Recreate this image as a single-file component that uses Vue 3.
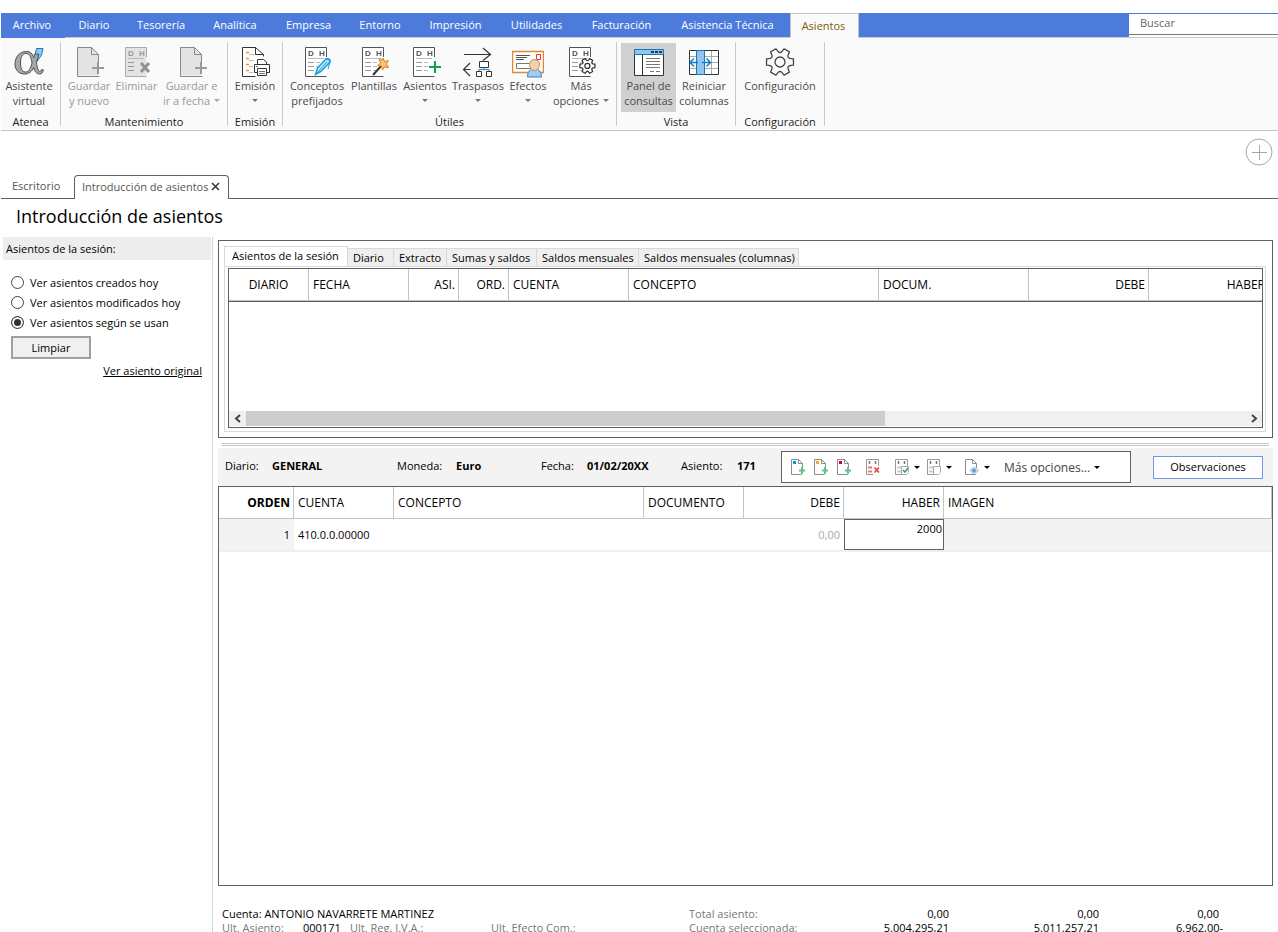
<script setup>
import { ref } from 'vue'

const menu = ['Archivo', 'Diario', 'Tesorería', 'Analítica', 'Empresa', 'Entorno', 'Impresión', 'Utilidades', 'Facturación', 'Asistencia Técnica', 'Asientos']

const groups = [
  { id: 'atenea', label: 'Atenea', items: [{ icon: 'alpha', lines: ['Asistente', 'virtual'] }] },
  {
    id: 'mant', label: 'Mantenimiento', items: [
      { icon: 'save', lines: ['Guardar', 'y nuevo'], disabled: true },
      { icon: 'remove', lines: ['Eliminar'], disabled: true },
      { icon: 'save', lines: ['Guardar e', 'ir a fecha'], caret: true, disabled: true },
    ],
  },
  { id: 'emision', label: 'Emisión', items: [{ icon: 'print', lines: ['Emisión', ''], caret: true }] },
  {
    id: 'utiles', label: 'Útiles', items: [
      { icon: 'pen', lines: ['Conceptos', 'prefijados'] },
      { icon: 'wand', lines: ['Plantillas'] },
      { icon: 'plus', lines: ['Asientos', ''], caret: true },
      { icon: 'transfer', lines: ['Traspasos', ''], caret: true },
      { icon: 'effects', lines: ['Efectos', ''], caret: true },
      { icon: 'docgear', lines: ['Más', 'opciones'], caret: true },
    ],
  },
  {
    id: 'vista', label: 'Vista', items: [
      { icon: 'panel', lines: ['Panel de', 'consultas'], pressed: true },
      { icon: 'columns', lines: ['Reiniciar', 'columnas'] },
    ],
  },
  { id: 'config', label: 'Configuración', items: [{ icon: 'gear', lines: ['Configuración'] }] },
]

const docIcons = ['remove', 'pen', 'wand', 'plus', 'docgear']
const usage = ref('uso')
const radios = [
  { value: 'creados', label: 'Ver asientos creados hoy' },
  { value: 'modificados', label: 'Ver asientos modificados hoy' },
  { value: 'uso', label: 'Ver asientos según se usan' },
]
const sessionTabs = ['Asientos de la sesión', 'Diario', 'Extracto', 'Sumas y saldos', 'Saldos mensuales', 'Saldos mensuales (columnas)']
const sessionCols = [
  { t: 'DIARIO', c: 'c80 mid' }, { t: 'FECHA', c: 'c100' }, { t: 'ASI.', c: 'c50 num' }, { t: 'ORD.', c: 'c50 num' },
  { t: 'CUENTA', c: 'c120' }, { t: 'CONCEPTO', c: 'c250' }, { t: 'DOCUM.', c: 'c150' }, { t: 'DEBE', c: 'c120 num' }, { t: 'HABER', c: 'c120 num' },
]
const haber = ref('2000')

// Six-toothed cog around (15, 15), one tooth every 60 degrees
const at = (deg, r) => `${(15 + r * Math.cos(deg * Math.PI / 180)).toFixed(2)} ${(15 + r * Math.sin(deg * Math.PI / 180)).toFixed(2)}`
const gearPath = 'M' + [0, 60, 120, 180, 240, 300]
  .flatMap(a => [at(a - 21, 10.2), at(a - 13, 13.8), at(a + 13, 13.8), at(a + 21, 10.2), at(a + 30, 9.4)])
  .join('L') + 'z'

const tools = [
  { icon: 'add', color: '#0096dc', name: 'Nueva línea' },
  { icon: 'add', color: '#f5a623', name: 'Insertar línea' },
  { icon: 'add', color: '#d6001c', name: 'Duplicar línea' },
  { icon: 'del', name: 'Borrar línea', gap: true },
  { icon: 'check', name: 'Validar', caret: true, gap: true },
  { icon: 'copy', name: 'Copiar', caret: true },
  { icon: 'view', name: 'Consultar', caret: true, gap: true },
]
</script>

<template>
  <div class="app">
    <header class="menubar">
      <nav class="menu">
        <button v-for="(m, i) in menu" :key="m" type="button" :class="{ file: i === 0, active: m === 'Asientos' }">{{ m }}</button>
      </nav>
      <div class="fill"></div>
      <div class="search"><input type="text" placeholder="Buscar" aria-label="Buscar" /></div>
    </header>

    <section class="ribbon">
      <div v-for="g in groups" :key="g.id" class="group" :class="g.id">
        <div class="items">
          <button v-for="(b, i) in g.items" :key="i" type="button" class="tool" :class="{ off: b.disabled, pressed: b.pressed }">
            <svg class="ico" width="32" height="32" viewBox="0 0 32 32" fill="none" aria-hidden="true">
              <template v-if="b.icon === 'alpha'">
                <path d="M23.500 2.500h6.500l-1.500 6.500-4.500 6.500-2.500-4z" fill="#8fcaf2" stroke="#1878be" />
                <path d="M13.500 5.500c-7 0-11.500 5.500-11.500 12.500 0 6 4 10 9.500 10 4.500 0 7.300-2.500 9.200-6.500 1 4 2.700 6.500 5.800 6.500 2.200 0 3.500-1.600 3.800-4.200h-2c-.2 1.200-.6 1.800-1.500 1.800-1.800 0-2.600-4-3.400-9l2.500-8.500h-4.200l-.9 3.500C19.500 7.800 17.500 5.500 13.500 5.500zM13 7.500c4 0 5.500 5 6 9.500-1.200 6-3.500 9-6.500 9-3.500 0-5-4-5-9 0-5.500 1.800-9.500 5.500-9.500z" fill="#a8a8a8" stroke="#505050" />
              </template>
              <template v-if="b.icon === 'save'">
                <path d="M4.500 1.500h14l7 7v21h-21z" fill="#e3e3e3" />
                <path d="M25.500 16v-7.500l-7-7h-14v29h22M18.500 1.500v7h7" stroke="#888" />
                <path d="M25 16v12M19 22h12" stroke="#999" stroke-width="2" />
              </template>
              <template v-if="docIcons.includes(b.icon)">
                <path d="M4.500 1.500h21v29h-21z" :fill="b.icon === 'remove' ? '#e3e3e3' : '#fff'" />
                <path d="M25.500 11v-9.500h-21v29h21" :stroke="b.icon === 'remove' ? '#aaa' : '#555'" />
                <path d="M7 12.500h16" stroke="#bbb" />
                <path d="M7 16.500h6M7 20.500h6M7 24.500h6" stroke="#999" />
                <path v-if="b.icon !== 'remove'" d="M15 16.500h4M15 20.500h4M15 24.500h4" stroke="#bbb" />
                <text x="7" y="10" class="dh" :fill="b.icon === 'remove' ? '#999' : '#555'">D</text>
                <text x="18" y="10" class="dh" :fill="b.icon === 'remove' ? '#999' : '#555'">H</text>
              </template>
              <path v-if="b.icon === 'remove'" d="M20 17l8 9M28 17l-8 9" stroke="#929292" stroke-width="3" />
              <template v-if="b.icon === 'print'">
                <path d="M3.500 1.500h14l7 7v21h-21z" fill="#fff" />
                <path d="M24.500 10.500v-2l-8-7h-13v29h13M16.500 1.500v7h8" stroke="#333" />
                <path d="M7 6.500h3M7 12.500h3M7 18.500h3M7 24.500h3" stroke="#f39a12" stroke-width="1.500" />
                <path d="M10 8.500h5M10 14.500h5M10 20.500h4M10 26.500h4" stroke="#bbb" />
                <path d="M18.500 18.500v-5h6l3 2.500v2.500" fill="#fff" stroke="#333" />
                <path d="M15.500 18.500h15v8h-15z" fill="#fff" stroke="#333" />
                <path d="M18.500 22.500h9v7h-9z" fill="#fff" stroke="#333" />
                <path d="M20 25.500h6M20 27.500h6M17 20.500h2" stroke="#777" />
              </template>
              <template v-if="b.icon === 'pen'">
                <path d="M14.500 28.500l2-6.500 8-8.500c2-2 5.500 0 4 3l-8.500 9z" fill="#b9e6fb" stroke="#1a9ede" stroke-width="1.500" />
                <path d="M16 27L26 16M24 13l5.500 1-2.500 9" stroke="#1a9ede" />
              </template>
              <template v-if="b.icon === 'wand'">
                <path d="M15 29l9-10" stroke="#333" stroke-width="2" />
                <path d="M25 12l1.500 3.500 4-1-2 3.500 2 3.500-4-.5-2 3-1-4-4-.5 3-2.500-1.500-4 3.500 1z" fill="#f8c27a" stroke="#df8326" />
              </template>
              <path v-if="b.icon === 'plus'" d="M26 15v12M20 21h12" stroke="#12a04c" stroke-width="2" />
              <template v-if="b.icon === 'transfer'">
                <path d="M2 8.500h26M21 2l7.500 6.500-7.500 6M1.500 23.500h7M8 17l-6.500 6.500 6.500 6.500" stroke="#333" stroke-width="1.200" />
                <path d="M17.500 15.500h9v6h-9zM14.500 25.500h5v5h-5zM24.500 25.500h5v5h-5z" fill="#fff" stroke="#333" />
                <path d="M22 21.500v2M17 25v-1.500h10V25" stroke="#2687cc" />
              </template>
              <template v-if="b.icon === 'effects'">
                <path d="M.5 5.500h31v21H.5z" fill="#fff" stroke="#e88430" stroke-width="1.500" />
                <path d="M4 9.500h14M4 11.500h11M4 13.500h8" stroke="#555" />
                <path d="M4.500 17.500h15v5h-15z" stroke="#777" />
                <path d="M24.500 8.500h4v5h-4z" stroke="#e33" />
                <path d="M15.500 31c0-5 2-8 7-8s7 3 7 8z" fill="#9fcdf1" stroke="#3b7fc0" />
                <path d="M22.500 24.500c-3 0-5-3-5-6s2-5 5-5 5 2 5 5-2 6-5 6z" fill="#f5cfab" stroke="#b98b63" />
              </template>
              <g v-if="b.icon === 'docgear'" transform="translate(14 11.500) scale(.56)">
                <path :d="gearPath" fill="#fff" stroke="#333" stroke-width="2.200" stroke-linejoin="round" />
                <circle cx="15" cy="15" r="4.500" stroke="#333" stroke-width="2.200" />
              </g>
              <template v-if="b.icon === 'panel'">
                <path d="M1.500 3.500h29v26h-29z" fill="#fff" stroke="#333" />
                <path d="M1.500 3.500h29v5h-29z" fill="#8fc5ee" stroke="#1878be" />
                <path d="M9.500 9v20" stroke="#333" />
                <path d="M18 6h3M22 6h3M26 6h3" stroke="#333" stroke-width="2" />
                <path d="M13 12.500h14M13 15.500h14M13 18.500h14M13 21.500h14M17 25.500h4M23 25.500h4" stroke="#777" />
              </template>
              <template v-if="b.icon === 'columns'">
                <path d="M1.500 4.500h29v24h-29z" fill="#fff" />
                <path d="M1 10.500h29M1 16.500h29M1 22.500h29M8.500 5v23M23.500 5v23" stroke="#aaa" />
                <path d="M1.500 4.500h29v24h-29z" stroke="#333" />
                <path d="M8.500 4.500h8v24h-8z" fill="#8fc5ee" stroke="#1878be" />
                <path d="M10 16.500H2.500M6 12.500l-4 4 4 4M14 16.500h8M18.500 12.500l4 4-4 4" stroke="#0d80cc" stroke-width="1.500" />
              </template>
              <g v-if="b.icon === 'gear'" transform="translate(1 1)">
                <path :d="gearPath" fill="#fafafa" stroke="#444" stroke-width="1.300" stroke-linejoin="round" />
                <circle cx="15" cy="15" r="5" stroke="#444" stroke-width="1.300" />
              </g>
            </svg>
            <span v-for="(l, n) in b.lines" :key="n" class="line">{{ l }}<i v-if="b.caret && n === 1" class="caret" :class="{ spaced: l }"></i></span>
          </button>
        </div>
        <div class="glabel">{{ g.label }}</div>
      </div>
    </section>

    <div class="addrow">
      <button type="button" class="add" aria-label="Añadir">
        <svg width="28" height="28" viewBox="0 0 28 28" fill="none" stroke="#a6a6a6"><circle cx="14" cy="14" r="13" /><path d="M14.500 7v15M7 14.500h15" /></svg>
      </button>
    </div>

    <nav class="tabs">
      <button type="button" class="tab">Escritorio</button>
      <button type="button" class="tab current">Introducción de asientos
        <svg width="9" height="9" viewBox="0 0 9 9" stroke="#333" stroke-width="1.500"><path d="M1 1l7 7M8 1L1 8" /></svg>
      </button>
    </nav>
    <h1>Introducción de asientos</h1>

    <div class="workspace">
      <aside>
        <h2>Asientos de la sesión:</h2>
        <div class="radios">
          <label v-for="r in radios" :key="r.value"><input v-model="usage" type="radio" name="usage" :value="r.value" />{{ r.label }}</label>
        </div>
        <button type="button" class="clear">Limpiar</button>
        <a href="#" class="original">Ver asiento original</a>
      </aside>

      <main>
        <section class="session">
          <div class="stabs">
            <button v-for="(t, i) in sessionTabs" :key="t" type="button" :class="{ on: i === 0 }">{{ t }}</button>
          </div>
          <div class="frame">
            <div class="sgrid">
              <div class="sview">
                <table class="stable">
                  <thead><tr><th v-for="c in sessionCols" :key="c.t" :class="c.c">{{ c.t }}</th></tr></thead>
                </table>
              </div>
              <div class="scroll">
                <button type="button" aria-label="Desplazar a la izquierda"><svg width="8" height="9" viewBox="0 0 8 9" fill="none" stroke="#444" stroke-width="2"><path d="M6 1L2 4.500l4 3.500" /></svg></button>
                <div class="track"><div class="thumb"></div></div>
                <button type="button" aria-label="Desplazar a la derecha"><svg width="8" height="9" viewBox="0 0 8 9" fill="none" stroke="#444" stroke-width="2"><path d="M2 1l4 3.500-4 3.500" /></svg></button>
              </div>
            </div>
          </div>
        </section>
        <div class="splitter"></div>

        <section class="entrybar">
          <span>Diario:</span><b>GENERAL</b>
          <span>Moneda:</span><b>Euro</b>
          <span>Fecha:</span><b>01/02/20XX</b>
          <span>Asiento:</span><b>171</b>
          <div class="toolbar">
            <button v-for="t in tools" :key="t.name" type="button" :aria-label="t.name" :class="{ gap: t.gap, drop: t.caret }">
              <svg width="15" height="16" viewBox="0 0 15 16" fill="none" stroke="#8c8c8c">
                <template v-if="t.icon === 'add'">
                  <path d="M11.500 9V4.500l-4-4h-7v15h10M7.500.5v4h4" fill="#fff" />
                  <path d="M2 2h3v3H2z" :fill="t.color" stroke="none" />
                  <path d="M11 8v7M8 11.500h6" stroke="#5cc487" stroke-width="2" />
                </template>
                <template v-else-if="t.icon === 'view'">
                  <path d="M11.500 9V4.500l-4-4h-7v15h10M7.500.5v4h4" fill="#fff" />
                  <path d="M5 11.500c3-4 5.500-4 8.500 0-3 4-5.500 4-8.500 0z" fill="#c6def2" stroke="#a9c8e0" /><circle cx="9" cy="11.500" r="2" fill="#5d9fd0" stroke="none" />
                </template>
                <template v-else>
                  <path d="M12.500 7V.5H.5v15h7" fill="#fff" stroke="#999" />
                  <path d="M3.500 2v3M9.500 2v3" stroke="#777" stroke-width="1.500" />
                  <path d="M2 8.500h4M2 12.500h4" :stroke="t.icon === 'del' ? '#f07070' : '#ccc'" stroke-width="2" />
                  <path v-if="t.icon === 'del'" d="M8.500 8.500l4.500 5M13 8.500l-4.500 5" stroke="#e43838" stroke-width="1.500" />
                  <path v-else d="M6.500 7.500h7v6l-2 2h-5z" fill="#fff" stroke="#aaa" />
                  <path v-if="t.icon === 'check'" d="M8 11l2 2 3-4" stroke="#27a85a" stroke-width="1.500" />
                </template>
              </svg>
              <i v-if="t.caret" class="caret black"></i>
            </button>
            <button type="button" class="more">Más opciones...<i class="caret black"></i></button>
          </div>
          <button type="button" class="notes">Observaciones</button>
        </section>

        <section class="entries">
          <table>
            <colgroup><col class="c75" /><col class="c100" /><col class="c250" /><col class="c100" /><col class="c100" /><col class="c100" /><col /></colgroup>
            <thead>
              <tr><th class="num bold">ORDEN</th><th>CUENTA</th><th>CONCEPTO</th><th>DOCUMENTO</th><th class="num">DEBE</th><th class="num">HABER</th><th>IMAGEN</th></tr>
            </thead>
            <tbody>
              <tr><td class="num shade">1</td><td>410.0.0.00000</td><td></td><td></td><td class="num faint">0,00</td><td class="edit"><input v-model="haber" type="text" aria-label="Haber" /></td><td class="shade"></td></tr>
            </tbody>
          </table>
        </section>

        <footer>
          <div class="frow">
            <span class="dark wide">Cuenta: ANTONIO NAVARRETE MARTINEZ</span>
            <span>Total asiento:</span><span class="val">0,00</span><span class="val">0,00</span><span class="val">0,00</span>
          </div>
          <div class="frow">
            <span>Ult. Asiento:</span><span class="dark">000171</span><span>Ult. Reg. I.V.A.:</span><span>Ult. Efecto Com.:</span>
            <span>Cuenta seleccionada:</span><span class="val">5.004.295,21</span><span class="val">5.011.257,21</span><span class="val signed">6.962,00-</span>
          </div>
        </footer>
      </main>
    </div>
  </div>
</template>

<style>
body { background: #fff; }
</style>

<style scoped>
.app { display: flex; flex-direction: column; height: 100vh; box-sizing: border-box; padding: 13px 0 0 1px; overflow: hidden; font: 11px/15px "Open Sans", "Noto Sans", sans-serif; color: #000; }
.app *, .app *::before { box-sizing: border-box; }
button, input { font: inherit; color: inherit; margin: 0; padding: 0; border: 0; background: none; border-radius: 0; }
button { cursor: pointer; white-space: nowrap; }

.menubar { display: flex; flex: none; height: 25px; background: #4d7bdb; }
.menu { display: grid; grid-template-columns: 64px 60px 74px 74px 73px 70px 81px 81px 89px 123px 69px; }
.menu button { color: #fff; border-bottom: 1px solid #c8c8c8; padding: 0 2px 1px 0; }
.menu .file { border-bottom-color: #4d7bdb; }
.menu .active { background: #fafafa; color: #7d5c0a; border: 1px solid #c4c4c4; border-bottom-color: #fafafa; }
.fill { flex: 1; border-bottom: 1px solid #c8c8c8; }
.search { width: 149px; margin-top: 1px; background: #fff; border-bottom: 1px solid #c8c8c8; }
.search input { display: block; width: 100%; height: 21px; padding: 0 11px 4px; border-bottom: 1px solid #777; outline: 0; }
.search input::placeholder { color: #666; opacity: 1; }

.ribbon { display: flex; flex: none; height: 93px; background: #fafafa; border-bottom: 1px solid #c4c4c4; }
.group { margin: 4px 0; border-right: 1px solid #c8c8c8; display: flex; flex-direction: column; }
.items { display: grid; flex: none; justify-content: center; height: 70px; padding-top: 1px; }
.atenea { width: 60px; } .atenea .items { grid-template-columns: 56px; justify-content: start; }
.mant { width: 167px; } .mant .items { grid-template-columns: 48px 47px 63px; }
.emision { width: 55px; } .emision .items { grid-template-columns: 54px; }
.utiles { width: 334px; } .utiles .items { grid-template-columns: 58px 56px 46px 60px 40px 66px; justify-content: start; padding-left: 5px; }
.vista { width: 119px; } .vista .items { grid-template-columns: 55px 56px; justify-content: start; padding-left: 4px; }
.config { width: 89px; } .config .items { grid-template-columns: 86px; }
.tool { display: flex; flex-direction: column; align-items: center; color: #4a4a4a; padding-top: 3px; }
.tool.off { color: #999; }
.tool.pressed { background: #d0d0d0; }
.ico { display: block; flex: none; }
.dh { font: bold 8px "Liberation Sans", sans-serif; }
.line { display: flex; align-items: center; flex: none; height: 15px; }
.glabel { text-align: center; white-space: nowrap; margin-top: 2px; color: #222; }
.caret { display: inline-block; border: 3px solid transparent; border-top: 3px solid #777; border-bottom: 0; }
.caret.spaced { margin-left: 4px; }
.off .caret { border-top-color: #aaa; }
.caret.black { border-top-color: #000; }

.addrow { flex: none; height: 44px; display: flex; justify-content: flex-end; align-items: center; padding: 0 5px 2px 0; }
.add svg { display: block; }
.tabs { flex: none; display: flex; height: 24px; border-bottom: 1px solid #606060; color: #555; }
.tab { width: 73px; padding: 0 11px 2px; text-align: left; color: #555; }
.tab.current { width: 155px; height: 24px; padding: 0 8px 3px 7px; display: flex; align-items: center; justify-content: space-between; background: #fff; border: 1px solid #606060; border-bottom: 0; border-radius: 4px 4px 0 0; }
h1 { flex: none; margin: 0; padding: 0 15px; height: 38px; font-size: 18px; line-height: 35px; font-weight: 400; }

.workspace { flex: 1; display: flex; min-height: 0; }
aside { flex: none; width: 212px; padding: 0 1px 0 2px; border-right: 1px solid #d4d4d4; display: flex; flex-direction: column; align-items: flex-start; }
h2 { margin: 0; width: 100%; padding: 0 3px; font-size: 11px; font-weight: 400; line-height: 23px; background: #ededed; }
.radios { padding: 12px 8px 4px; }
.radios label { display: flex; align-items: center; height: 20px; gap: 6px; }
.radios input { appearance: none; width: 13px; height: 13px; border: 1px solid #444; border-radius: 50%; background: #fff; }
.radios input:checked { background: #333; box-shadow: inset 0 0 0 2px #fff; }
.clear { width: 80px; height: 23px; margin-left: 8px; border: 2px solid #a0a0a0; background: #f0f0f0; }
.original { align-self: flex-end; margin: 4px 9px 0; color: #000; }

main { flex: 1; min-width: 0; display: flex; flex-direction: column; padding: 3px 5px 0; }
.session { flex: none; height: 198px; border: 1px solid #606060; padding: 5px 6px 5px 5px; display: flex; flex-direction: column; }
.stabs { display: grid; flex: none; grid-template-columns: 124px 46px 53px 90px 102px 160px; align-items: end; height: 20px; }
.stabs button { height: 18px; text-align: left; padding: 0 0 0 5px; background: #efefef; border: 1px solid #d9d9d9; border-left: 0; border-bottom: 0; }
.stabs .on { height: 20px; padding: 0 0 2px 7px; background: #fff; border-left: 1px solid #d9d9d9; }
.frame { flex: 1; min-height: 0; border: 1px solid #d9d9d9; padding: 1px 2px 3px 3px; display: flex; }
.sgrid { flex: 1; min-width: 0; border: 1px solid #606060; display: flex; flex-direction: column; }
.sview { flex: 1; overflow: hidden; }
table { border-collapse: separate; border-spacing: 0; table-layout: fixed; }
.stable { width: 1040px; border-bottom: 1px solid #606060; }
th { font-size: 12px; font-weight: 400; text-align: left; padding: 0 4px; height: 32px; border-right: 1px solid #c4c4c4; border-bottom: 1px solid #c4c4c4; white-space: nowrap; }
th.num { padding-right: 3px; }
.c50 { width: 50px; } .c75 { width: 75px; } .c80 { width: 80px; } .c100 { width: 100px; } .c120 { width: 120px; } .c150 { width: 150px; } .c250 { width: 250px; }
th.mid { text-align: center; }
.num, th.num { text-align: right; }
.scroll { flex: none; display: flex; height: 15px; margin-bottom: 1px; background: #f0f0f0; }
.scroll button { flex: none; width: 17px; display: grid; place-items: center; }
.track { flex: 1; }
.thumb { width: 64%; height: 100%; background: #cdcdcd; }
.splitter { flex: none; height: 3px; margin: 5px 4px 2px; border: 1px solid #c4c4c4; border-width: 1px 0; }

.entrybar { flex: none; display: grid; grid-template-columns: 47px 125px 59px 85px 46px 94px 56px 44px 350px 1fr; align-items: center; height: 38px; padding: 0 10px 0 7px; background: #f3f3f3; }
.entrybar > span, .entrybar > b { padding-bottom: 3px; }
.toolbar { height: 32px; background: #fff; border: 1px solid #606060; display: flex; align-items: center; padding-left: 9px; }
.toolbar button { display: flex; align-items: center; gap: 4px; margin-right: 8px; flex: none; }
.toolbar .drop { margin-right: 7px; }
.toolbar .gap { margin-left: 6px; }
.toolbar .more { font-size: 12px; margin-left: 7px; color: #444; }
.notes { justify-self: end; width: 110px; height: 23px; padding-bottom: 2px; background: #fff; border: 1px solid #7096e4; }

.entries { flex: 1; min-height: 0; border: 1px solid #606060; }
.entries table { width: 100%; }
td { height: 33px; padding: 0 4px; border-bottom: 2px solid #efefef; }
.bold { font-weight: 700; }
.shade { background: #f3f3f3; }
.faint { color: #aaa; }
td.edit { padding: 0; vertical-align: top; }
.edit input { display: block; width: 100%; height: 31px; padding: 0 1px 12px; text-align: right; border: 1px solid #606060; outline: 0; background: #fff; }

footer { flex: none; height: 46px; padding: 21px 4px 0; overflow: hidden; color: #777; }
.frow { display: grid; grid-template-columns: 81px 47px 141px 198px 100px 160px 150px 120px; line-height: 14px; height: 14px; white-space: nowrap; }
.wide { grid-column: span 4; }
.dark, .val { color: #000; }
.val { text-align: right; }
.signed { margin-right: -4px; }
</style>
